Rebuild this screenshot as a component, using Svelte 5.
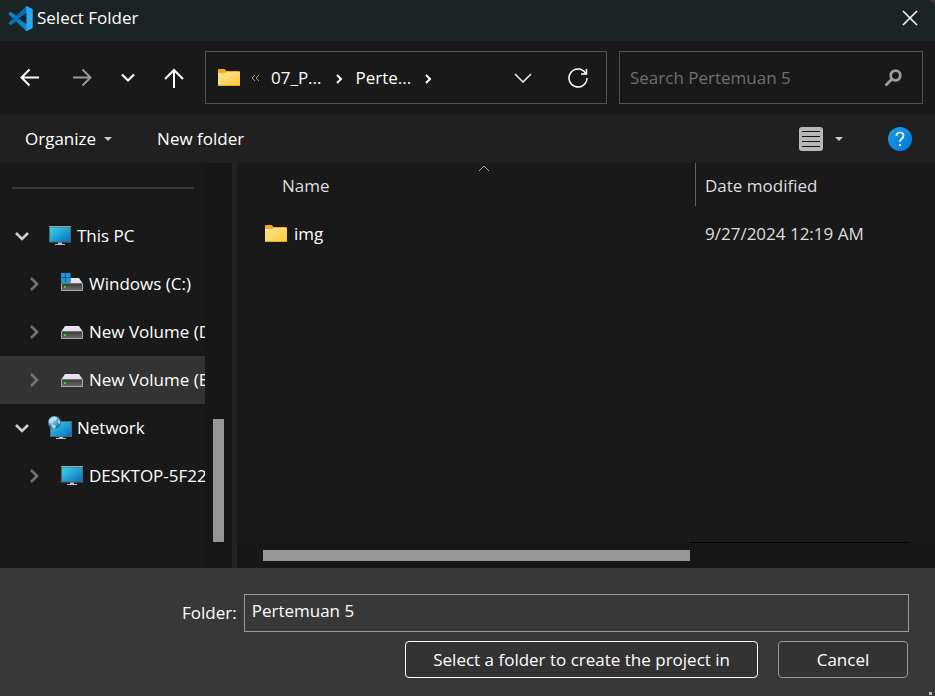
<script>
  let folder = $state('Pertemuan 5');
  let query = $state('');

  const tree = [
    { label: 'This PC', icon: 'pc', open: true, level: 0 },
    { label: 'Windows (C:)', icon: 'windrive', level: 1 },
    { label: 'New Volume (D:)', icon: 'drive', level: 1 },
    { label: 'New Volume (E:)', icon: 'drive', level: 1, selected: true },
    { label: 'Network', icon: 'network', open: true, level: 0 },
    { label: 'DESKTOP-5F22', icon: 'pc', level: 1 }
  ];

  const files = [{ name: 'img', date: '9/27/2024 12:19 AM' }];
</script>

<svelte:head><title>Select Folder</title></svelte:head>

<svg class="defs" width="0" height="0" aria-hidden="true">
  <defs>
    <linearGradient id="g-folder" x1="0" y1="0" x2="1" y2="1">
      <stop offset="0" stop-color="#ffe69c" />
      <stop offset="1" stop-color="#ffc934" />
    </linearGradient>
    <linearGradient id="g-screen" x1="0" y1="0" x2="1" y2="1">
      <stop offset="0" stop-color="#35d7e6" />
      <stop offset="1" stop-color="#0b6cc4" />
    </linearGradient>
    <linearGradient id="g-help" x1="0" y1="0" x2="1" y2="1">
      <stop offset="0" stop-color="#1f9be6" />
      <stop offset="1" stop-color="#0078d7" />
    </linearGradient>
    <linearGradient id="g-drive" x1="0" y1="0" x2="0" y2="1">
      <stop offset="0" stop-color="#3a3a3a" />
      <stop offset="1" stop-color="#6a6a6a" />
    </linearGradient>
    <radialGradient id="g-globe" cx="0.4" cy="0.3" r="0.8">
      <stop offset="0" stop-color="#9fd4ec" />
      <stop offset="0.5" stop-color="#4a9cc8" />
      <stop offset="1" stop-color="#1b5578" />
    </radialGradient>
  </defs>
</svg>

{#snippet folderIcon()}
  <svg width="22" height="18" viewBox="0 0 22 18" aria-hidden="true">
    <path d="M0 1Q0 0 1 0H6.500L8.500 2H21Q22 2 22 3V6H0Z" fill="#f7ac17" />
    <path d="M0 4H7L8.500 3H22V16Q22 17 21 17H1Q0 17 0 16Z" fill="url(#g-folder)" />
    <path d="M0.500 16.500H21.500" stroke="#e8a81c" />
  </svg>
{/snippet}

{#snippet treeIcon(kind)}
  <svg width="24" height="24" viewBox="0 0 24 24" aria-hidden="true">
    {#if kind === 'pc'}
      <rect x="1" y="2" width="22" height="16.500" fill="#59656d" />
      <rect x="1" y="2" width="22" height="1" fill="#9aa3a8" />
      <rect x="2" y="3.500" width="20" height="14" fill="url(#g-screen)" />
      <path d="M10 18.500h4v1.500h3v1H7v-1h3z" fill="#b9c0c5" />
    {:else if kind === 'network'}
      <rect x="2" y="5" width="22" height="16" fill="#59656d" />
      <rect x="3" y="6" width="20" height="14" fill="url(#g-screen)" />
      <path d="M11 21h4v1h3v1H8v-1h3z" fill="#b9c0c5" />
      <circle cx="6.500" cy="6.500" r="6.500" fill="url(#g-globe)" />
      <path d="M1 4Q4 0 8 1L9 3 6 5 4 8 1 7ZM3 8l4 1 1 2-2 2-2-2zM10 4l2 1v3l-2-1z" fill="#c8e6f2" opacity="0.8" />
    {:else}
      <path d="M5 6h14l4 6H1z" fill="#e6e6ea" />
      <rect x="1" y="11" width="22" height="8" rx="1" fill="#a8a8a8" />
      <rect x="2" y="11.500" width="20" height="6.500" fill="url(#g-drive)" />
      <rect x="4" y="14" width="2" height="2" fill="#22e022" />
      {#if kind === 'windrive'}
        <path d="M1 1h9.500v9.500H1z" fill="#191919" />
        <path d="M1 1h4.500v4.500H1zM6 1h4.500v4.500H6zM1 6h4.500v4.500H1zM6 6h4.500v4.500H6z" fill="#159be6" />
      {/if}
    {/if}
  </svg>
{/snippet}

<div class="window">
  <header class="titlebar">
    <svg width="25" height="25" viewBox="0 0 100 100" aria-hidden="true">
      <path d="M1 32l7-7q3-2 6 0l85 64-26 11z" fill="#0a84cf" />
      <path d="M1 68l7 7q3 2 6 0L75 30V0z" fill="#0670b5" />
      <path d="M73 0l23 11q3 1 3 5v68q0 4-3 5L73 100q-4 1-6-2 6 4 6-3V5q0-7-6-3 2-3 6-2z" fill="#27a8f2" />
      <path d="M73 28v44L43 50z" fill="#1c2324" />
    </svg>
    <h1>Select Folder</h1>
    <button class="close" aria-label="Close">
      <svg width="16" height="16" viewBox="0 0 16 16"><path d="M1 1l14 14M15 1L1 15" stroke="#fff" stroke-width="1.500" /></svg>
    </button>
  </header>

  <div class="navbar">
    <div class="history">
      <button aria-label="Back">
        <svg width="20" height="20" viewBox="0 0 20 20"><path d="M19 9.500H2M9.500 1.500l-8 8 8 8" stroke="#fff" stroke-width="2" fill="none" /></svg>
      </button>
      <button aria-label="Forward">
        <svg width="20" height="20" viewBox="0 0 20 20"><path d="M1 9.500h17M10.500 1.500l8 8-8 8" stroke="#999" stroke-width="2" fill="none" /></svg>
      </button>
      <button aria-label="Recent locations">
        <svg width="20" height="20" viewBox="0 0 20 20"><path d="M4 6.500l6 6 6-6" stroke="#fff" stroke-width="2.200" fill="none" /></svg>
      </button>
      <button aria-label="Up">
        <svg width="20" height="20" viewBox="0 0 20 20"><path d="M10 20V2M1 11l9-9 9 9" stroke="#fff" stroke-width="2" fill="none" /></svg>
      </button>
    </div>

    <div class="address">
      {@render folderIcon()}
      <button class="more" aria-label="Parent folders">
        <svg width="8" height="8" viewBox="0 0 8 8"><path d="M4 1L1 4l3 3M8 1L5 4l3 3" stroke="#9c9c9c" fill="none" /></svg>
      </button>
      <a class="crumb" href="#parent">07_P...</a>
      <svg class="sep" width="8" height="10" viewBox="0 0 8 10" aria-hidden="true"><path d="M2 1l4 4-4 4" stroke="#fff" stroke-width="2" fill="none" /></svg>
      <a class="crumb" href="#current">Perte...</a>
      <svg class="sep" width="8" height="10" viewBox="0 0 8 10" aria-hidden="true"><path d="M2 1l4 4-4 4" stroke="#fff" stroke-width="2" fill="none" /></svg>
      <button class="push" aria-label="Previous locations">
        <svg width="18" height="10" viewBox="0 0 18 10"><path d="M1 1l8 8 8-8" stroke="#eee" stroke-width="1.500" fill="none" /></svg>
      </button>
      <button aria-label="Refresh">
        <svg width="20" height="20" viewBox="0 0 20 20"><path d="M17.500 5A9 9 0 1 0 19 10M18.500 1v5h-5.500" stroke="#fff" stroke-width="1.500" fill="none" /></svg>
      </button>
    </div>

    <div class="search">
      <input type="text" aria-label="Search" placeholder="Search Pertemuan 5" bind:value={query} />
      <svg width="18" height="18" viewBox="0 0 18 18" aria-hidden="true"><circle cx="11.500" cy="6.500" r="4.800" fill="none" stroke="#9c9c9c" stroke-width="2.800" /><path d="M8 10L1.500 16.500" stroke="#9c9c9c" stroke-width="2.800" /></svg>
    </div>
  </div>

  <div class="toolbar">
    <button>Organize <svg width="8" height="4" viewBox="0 0 8 4"><path d="M0 0h8L4 4z" fill="#ccc" /></svg></button>
    <button>New folder</button>
    <button class="push view" aria-label="Change your view">
      <svg width="24" height="24" viewBox="0 0 24 24"><rect width="24" height="24" rx="3" fill="#b8b6b6" /><path d="M3 4.500h18M3 9.500h18M3 14.500h18M3 19.500h18" stroke="#141414" /></svg>
      <svg width="8" height="4" viewBox="0 0 8 4"><path d="M0 0h8L4 4z" fill="#ccc" /></svg>
    </button>
    <button class="help" aria-label="Help">
      <svg width="24" height="24" viewBox="0 0 24 24"><circle cx="12" cy="12" r="12" fill="url(#g-help)" /><path d="M8.500 9Q8.500 5.500 12 5.500t3.500 3.200Q15.500 10.500 13.500 12 12 13 12 15" stroke="#fff" stroke-width="1.700" fill="none" /><rect x="11" y="17" width="2" height="2" fill="#fff" /></svg>
    </button>
  </div>

  <div class="body">
    <nav aria-label="Folders">
      <div class="tree">
        <hr />
        <ul>
          {#each tree as item}
            <li class:child={item.level === 1} class:selected={item.selected}>
              <button aria-label={item.open ? 'Collapse' : 'Expand'}>
                <svg width="16" height="16" viewBox="0 0 16 16">
                  {#if item.open}
                    <path d="M2 5l6 6 6-6" stroke="#ccc" stroke-width="2.600" fill="none" />
                  {:else}
                    <path d="M5 2l6 6-6 6" stroke="#747474" stroke-width="2.600" fill="none" />
                  {/if}
                </svg>
              </button>
              <a href="#location">{@render treeIcon(item.icon)}<span>{item.label}</span></a>
            </li>
          {/each}
        </ul>
      </div>
      <div class="vscroll"><div></div></div>
    </nav>

    <main>
      <table>
        <thead>
          <tr>
            <th class="name">
              Name
              <svg width="12" height="7" viewBox="0 0 12 7" aria-hidden="true"><path d="M1 6l5-5 5 5" stroke="#aaa" fill="none" /></svg>
            </th>
            <th class="date">Date modified</th>
          </tr>
        </thead>
        <tbody>
          {#each files as file}
            <tr>
              <td class="name"><div class="file">{@render folderIcon()}<span>{file.name}</span></div></td>
              <td class="date">{file.date}</td>
            </tr>
          {/each}
        </tbody>
      </table>
      <div class="hscroll"><div class="thumb"></div><div class="rest"></div></div>
    </main>
  </div>

  <footer>
    <div class="field">
      <label for="folder">Folder:</label>
      <input id="folder" type="text" bind:value={folder} />
    </div>
    <div class="actions">
      <button class="primary">Select a folder to create the project in</button>
      <button>Cancel</button>
    </div>
    <span class="grip"></span>
  </footer>
</div>

<style>
  :global(body) {
    margin: 0;
    background: #383838;
  }
  .defs {
    position: absolute;
  }
  .window {
    min-height: 100vh;
    display: flex;
    flex-direction: column;
    font-family: 'Open Sans', 'Noto Sans', sans-serif;
    font-size: 17px;
    line-height: 24px;
    color: #fff;
  }
  svg {
    display: block;
    flex: none;
  }
  button {
    display: flex;
    align-items: center;
    justify-content: center;
    padding: 0;
    border: 0;
    background: none;
    color: inherit;
    font: inherit;
  }
  input {
    font: inherit;
    color: inherit;
    background: none;
    outline: none;
    box-sizing: border-box;
    min-width: 0;
  }
  a {
    color: inherit;
    text-decoration: none;
  }
  .push {
    margin-left: auto;
  }
  .titlebar {
    display: flex;
    align-items: center;
    gap: 4px;
    height: 41px;
    padding: 0 17px 5px 8px;
    box-sizing: border-box;
    background: #1c2324;
    border-top-right-radius: 8px;
  }
  h1 {
    margin: 0;
    font: inherit;
  }
  .close {
    margin-left: auto;
  }
  .navbar {
    display: flex;
    gap: 12px;
    padding: 10px 12px 11px 0;
    background: #191919;
  }
  .history {
    display: flex;
    align-items: center;
    width: 193px;
    gap: 26px;
    padding-left: 20px;
    box-sizing: border-box;
    flex: none;
  }
  .history button:first-child {
    margin-right: 6px;
  }
  .address,
  .search {
    display: flex;
    align-items: center;
    height: 53px;
    box-sizing: border-box;
    border: 1px solid #535353;
  }
  .address {
    flex: 370 1 0;
    padding: 0 18px 0 12px;
  }
  .more {
    margin: 0 12px 0 11px;
  }
  .crumb {
    white-space: nowrap;
  }
  .sep {
    margin: 2px 13px 0;
  }
  .address .push {
    margin-right: 36px;
  }
  .search {
    flex: 272 1 0;
    padding: 0 20px 0 10px;
    gap: 8px;
  }
  .search input {
    flex: 1;
    border: 0;
    padding: 0;
  }
  .search input::placeholder {
    color: #6e6e6e;
    opacity: 1;
  }
  .toolbar {
    display: flex;
    align-items: center;
    height: 48px;
    padding: 0 23px 0 25px;
    gap: 45px;
    background: #202020;
  }
  .toolbar button {
    gap: 8px;
  }
  .toolbar .view {
    gap: 12px;
  }
  .body {
    flex: 1;
    display: flex;
    background: #191919;
  }
  nav {
    display: flex;
    width: 232px;
    flex: none;
    border-right: 5px solid #222;
  }
  .tree {
    width: 205px;
    overflow: hidden;
  }
  hr {
    height: 2px;
    margin: 24px 11px 23px 12px;
    border: 0;
    background: #3a3a3a;
  }
  ul {
    margin: 0;
    padding: 0;
    list-style: none;
  }
  li {
    display: flex;
    align-items: center;
    height: 48px;
    padding-left: 14px;
    gap: 18px;
    white-space: nowrap;
  }
  li.child {
    padding-left: 26px;
  }
  li.selected {
    background: #333;
  }
  li a {
    display: flex;
    align-items: center;
    gap: 5px;
  }
  .vscroll {
    flex: 1;
    display: flex;
    flex-direction: column;
    justify-content: flex-end;
    align-items: center;
    padding-bottom: 26px;
    background: #171717;
  }
  .vscroll div {
    width: 11px;
    height: 123px;
    background: #969696;
  }
  main {
    flex: 1;
    min-width: 0;
    display: flex;
    flex-direction: column;
    justify-content: space-between;
  }
  table {
    width: 100%;
    border-collapse: separate;
    border-spacing: 0;
    table-layout: fixed;
  }
  th,
  td {
    padding: 2px 0 0;
    box-sizing: border-box;
    text-align: left;
    font-weight: 400;
    color: #dedede;
  }
  th {
    position: relative;
    height: 43px;
  }
  th.name {
    width: 458px;
    padding-left: 45px;
  }
  th.name svg {
    position: absolute;
    top: 2px;
    left: calc(50% + 12px);
  }
  th.date {
    border-left: 1px solid #636363;
  }
  .date {
    padding-left: 9px;
  }
  td.date {
    padding-left: 10px;
  }
  td {
    height: 56px;
    padding-top: 0;
  }
  .file {
    display: flex;
    align-items: center;
    gap: 7px;
    padding-left: 28px;
    color: #fff;
  }
  .hscroll {
    display: flex;
    height: 26px;
    padding: 0 26px;
    background: #171717;
  }
  .thumb {
    flex: 427 1 0;
    height: 11px;
    margin-top: 8px;
    background: #969696;
  }
  .rest {
    flex: 219 1 0;
    border-top: 1px solid #000;
  }
  footer {
    position: relative;
    padding: 26px 26px 18px;
    background: #383838;
  }
  .field {
    display: flex;
    align-items: center;
    gap: 7px;
    padding-left: 156px;
  }
  .field input {
    flex: 1;
    height: 38px;
    padding: 0 7px 6px;
    border: 1px solid #999;
  }
  .actions {
    display: flex;
    justify-content: flex-end;
    gap: 20px;
    margin: 9px 1px 0 0;
  }
  .actions button {
    height: 37px;
    min-width: 130px;
    padding: 0 27px;
    border: 1px solid #999;
    border-radius: 4px;
    background: #333;
  }
  .actions .primary {
    border-color: #fff;
  }
  .grip {
    position: absolute;
    right: 3px;
    bottom: 1px;
    width: 3px;
    height: 3px;
    background: #bbb;
  }
</style>
